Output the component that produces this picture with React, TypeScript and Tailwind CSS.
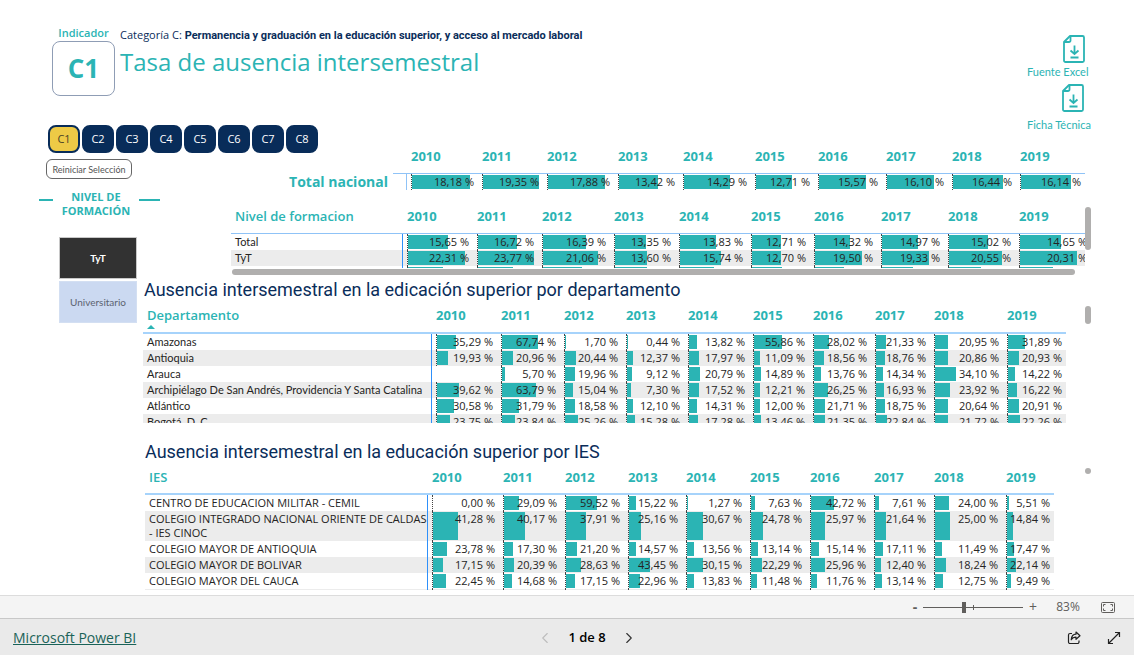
import React, { useState } from 'react';
import { ChevronLeft, ChevronRight } from 'lucide-react';
import clsx from 'clsx';

interface Row {
  name: string;
  values: (number | null)[];
}

interface YearTableProps {
  label: string;
  rows: Row[];
  colWidths: string[];
  /** Value that fills the whole width of a cell */
  scale: number;
  headClass: string;
  lineClass: string;
  nameClass: string;
  cornerLabel?: boolean;
  sorted?: boolean;
}

const YEARS = [2010, 2011, 2012, 2013, 2014, 2015, 2016, 2017, 2018, 2019];
const INDICATORS = ['C1', 'C2', 'C3', 'C4', 'C5', 'C6', 'C7', 'C8'];

const totalRows: Row[] = [
  { name: 'Total nacional', values: [18.18, 19.35, 17.88, 13.42, 14.29, 12.71, 15.57, 16.1, 16.44, 16.14] },
];

const levelRows: Row[] = [
  { name: 'Total', values: [15.65, 16.72, 16.39, 13.35, 13.83, 12.71, 14.32, 14.97, 15.02, 14.65] },
  { name: 'TyT', values: [22.31, 23.77, 21.06, 13.6, 15.74, 12.7, 19.5, 19.33, 20.55, 20.31] },
  { name: 'Universitario', values: [13.9, 14.8, 14.8, 13.4, 12.8, 13, 12, 12.8, 12.5, 12] },
];

const departmentRows: Row[] = [
  { name: 'Amazonas', values: [35.29, 67.74, 1.7, 0.44, 13.82, 55.86, 28.02, 21.33, 20.95, 31.89] },
  { name: 'Antioquia', values: [19.93, 20.96, 20.44, 12.37, 17.97, 11.09, 18.56, 18.76, 20.86, 20.93] },
  { name: 'Arauca', values: [null, 5.7, 19.96, 9.12, 20.79, 14.89, 13.76, 14.34, 34.1, 14.22] },
  {
    name: 'Archipiélago De San Andrés, Providencia Y Santa Catalina',
    values: [39.62, 63.79, 15.04, 7.3, 17.52, 12.21, 26.25, 16.93, 23.92, 16.22],
  },
  { name: 'Atlántico', values: [30.58, 31.79, 18.58, 12.1, 14.31, 12, 21.71, 18.75, 20.64, 20.91] },
  { name: 'Bogotá, D. C.', values: [23.75, 23.84, 25.26, 15.28, 17.28, 13.46, 21.35, 22.84, 21.72, 22.26] },
];

const iesRows: Row[] = [
  { name: 'CENTRO DE EDUCACION MILITAR - CEMIL', values: [0, 29.09, 59.52, 15.22, 1.27, 7.63, 42.72, 7.61, 24, 5.51] },
  {
    name: 'COLEGIO INTEGRADO NACIONAL ORIENTE DE CALDAS - IES CINOC',
    values: [41.28, 40.17, 37.91, 25.16, 30.67, 24.78, 25.97, 21.64, 25, 14.84],
  },
  { name: 'COLEGIO MAYOR DE ANTIOQUIA', values: [23.78, 17.3, 21.2, 14.57, 13.56, 13.14, 15.14, 17.11, 11.49, 17.47] },
  { name: 'COLEGIO MAYOR DE BOLIVAR', values: [17.15, 20.39, 28.63, 43.45, 30.15, 22.29, 25.96, 12.4, 18.24, 22.14] },
  { name: 'COLEGIO MAYOR DEL CAUCA', values: [22.45, 14.68, 17.15, 22.96, 13.83, 11.48, 11.76, 13.14, 12.75, 9.49] },
  { name: 'COLEGIO MILITAR', values: [18, 18, 27, 27, 20, 22, 24, 20, 22, 30] },
];

const formatPercent = (value: number) => `${value.toFixed(2).replace('.', ',')} %`;

const YearTable: React.FC<YearTableProps> = ({
  label,
  rows,
  colWidths,
  scale,
  headClass,
  lineClass,
  nameClass,
  cornerLabel = true,
  sorted,
}) => (
  <table className="w-full table-fixed border-separate border-spacing-0 text-[11px] leading-[14px] text-[#252423]">
    <colgroup>
      <col />
      {colWidths.map((width, index) => (
        <col key={index} className={width} />
      ))}
    </colgroup>
    <thead>
      <tr className={clsx('align-top text-left text-[13px] leading-5 text-[#2bb4b4]', headClass)}>
        {cornerLabel ? (
          <th className={clsx('border-b p-0 pl-1 font-semibold', lineClass)}>
            {label}
            {sorted && (
              <svg viewBox="0 0 8 4" className="h-1 w-2" fill="currentColor" aria-hidden="true">
                <path d="M4 0l4 4H0z" />
              </svg>
            )}
          </th>
        ) : (
          <td className="p-0 align-bottom">
            <span className={clsx('ml-auto block w-3.5 border-b', lineClass)} />
          </td>
        )}
        {YEARS.map((year) => (
          <th key={year} className={clsx('border-b p-0 pl-1 font-bold', lineClass)}>
            {year}
          </th>
        ))}
      </tr>
    </thead>
    <tbody>
      {rows.map((row, rowIndex) => (
        <tr key={row.name} className={clsx('align-top', rowIndex % 2 === 1 && 'bg-[#ececec]')}>
          <th scope="row" className={nameClass}>
            {row.name}
          </th>
          {row.values.map((value, index) => (
            <td key={index} className="relative p-0 py-px pr-1 text-right whitespace-nowrap">
              {value !== null && (
                <>
                  <span className="absolute inset-y-0 right-0 left-1 border-l border-dotted border-[#444] py-px">
                    <span
                      className="block h-full bg-[#2bb4b4]"
                      style={{ width: `${(value / scale) * 100}%` }}
                    />
                  </span>
                  <span className="relative">{formatPercent(value)}</span>
                </>
              )}
            </td>
          ))}
        </tr>
      ))}
    </tbody>
  </table>
);

const DownloadIcon: React.FC = () => (
  <svg viewBox="0 0 22 28" className="h-7 w-[22px]" fill="none" stroke="#2bb4b4" strokeWidth="1.8" aria-hidden="true">
    <path d="M7 1h12.5A1.5 1.5 0 0 1 21 2.5v23a1.5 1.5 0 0 1-1.5 1.5h-17A1.5 1.5 0 0 1 1 25.5V7z" strokeLinejoin="round" />
    <path d="M7.500 1v4.500a1.500 1.500 0 0 1-1.500 1.500H1" />
    <path d="M11.500 10.500v8.500M7.500 15.500l4 3.500 4-3.500M7.500 22.500h8" />
  </svg>
);

const App: React.FC = () => {
  const [indicator, setIndicator] = useState('C1');
  const [level, setLevel] = useState('TyT');

  return (
    <div className="flex min-h-screen flex-col bg-white font-['Open_Sans',sans-serif] text-[#252423]">
      <main className="flex-1 pt-[26px] pr-[43px] pl-[39px]">
        {/* Header */}
        <header className="flex items-start justify-between pl-[13px]">
          <div className="flex gap-[5px]">
            <div className="w-[63px] text-center text-[#2bb4b4]">
              <div className="pb-px text-[11px] leading-[14px] font-semibold">Indicador</div>
              <div className="rounded-lg border border-[#8f9db5] text-[26px] leading-[53px] font-bold">C1</div>
            </div>
            <div className="pt-0.5">
              <p className="text-[11px] leading-[14px] text-[#0a2d5a]">
                Categoría C:{' '}
                <strong className="font-['Roboto',sans-serif] font-bold">
                  Permanencia y graduación en la educación superior, y acceso al mercado laboral
                </strong>
              </p>
              <h1 className="text-2xl leading-[38px] text-[#2bb4b4]">Tasa de ausencia intersemestral</h1>
            </div>
          </div>
          <div className="w-16 pt-[9px] font-['Lato',sans-serif] text-[11px] leading-[14px] whitespace-nowrap text-[#2bb4b4]">
            <a href="#excel" className="flex flex-col">
              <span className="pl-9">
                <DownloadIcon />
              </span>
              <span className="pt-0.5">Fuente Excel</span>
            </a>
            <a href="#ficha" className="flex flex-col pt-[5px]">
              <span className="pl-[35px]">
                <DownloadIcon />
              </span>
              <span className="pt-1.5">Ficha Técnica</span>
            </a>
          </div>
        </header>

        {/* Indicators and national total */}
        <div className="-mt-[7px] flex justify-between">
          <div className="w-[220px] shrink-0 pl-[7px]">
            <nav className="flex gap-0.5 pl-0.5">
              {INDICATORS.map((code) => (
                <button
                  key={code}
                  type="button"
                  onClick={() => setIndicator(code)}
                  className={clsx(
                    'h-7 w-8 shrink-0 rounded-lg border-2 border-[#082c59] text-[11px]',
                    code === indicator ? 'bg-[#eeca46] text-[#4a4326]' : 'bg-[#082c59] text-white'
                  )}
                >
                  {code}
                </button>
              ))}
            </nav>
            <button
              type="button"
              onClick={() => {
                setIndicator('C1');
                setLevel('TyT');
              }}
              className="mt-1.5 h-5 w-[86px] rounded-md border border-[#666] pt-0.5 font-['Lato',sans-serif] text-[9px] whitespace-nowrap text-[#555]"
            >
              Reiniciar Selección
            </button>
          </div>
          <div className="min-w-0 flex-1 pt-[21px] pr-1.5">
            <YearTable
              label="Total"
              cornerLabel={false}
              rows={totalRows}
              scale={20.7}
              headClass="h-7"
              lineClass="border-[#8fc3f7]"
              nameClass="border-r border-[#8fc3f7] p-0 pr-[18px] text-right text-sm leading-4 font-bold whitespace-nowrap text-[#2bb4b4]"
              colWidths={['w-[71px]', 'w-[65px]', 'w-[71px]', 'w-[65px]', 'w-[72px]', 'w-[63px]', 'w-[68px]', 'w-[66px]', 'w-[68px]', 'w-[69px]']}
            />
          </div>
        </div>

        <div className="flex">
          {/* Level slicer */}
          <aside className="w-[104px] shrink-0">
            <div className="flex w-[121px] justify-between">
              <span className="mt-[9px] h-0.5 w-3.5 bg-[#2bb4b4]" />
              <h2 className="text-center text-[11px] leading-[14px] font-bold text-[#2bb4b4]">
                NIVEL DE
                <br />
                FORMACIÓN
              </h2>
              <span className="mt-[9px] h-0.5 w-[21px] bg-[#2bb4b4]" />
            </div>
            <div className="mt-[19px] ml-5 flex w-[78px] flex-col gap-0.5">
              {['TyT', 'Universitario'].map((name) => (
                <button
                  key={name}
                  type="button"
                  onClick={() => setLevel(name)}
                  className={clsx(
                    "h-[42px] border font-['Lato',sans-serif] text-[10px]",
                    level === name
                      ? 'border-[#c8c8c8] bg-[#323232] font-bold text-white'
                      : 'border-[#d3dff2] bg-[#cbd9f1] text-[#5c6370]'
                  )}
                >
                  {name}
                </button>
              ))}
            </div>
          </aside>

          <div className="min-w-0 flex-1">
            {/* By level */}
            <section className="ml-[88px] pt-4">
              <div className="flex">
                <div className="h-[62px] min-w-0 flex-1 overflow-hidden">
                  <div className="-mr-1.5">
                    <YearTable
                      label="Nivel de formacion"
                      rows={levelRows}
                      scale={25.5}
                      headClass="h-7"
                      lineClass="border-[#8fc3f7]"
                      nameClass="border-r border-[#2e90fa] px-1 py-px text-left font-['Lato',sans-serif] font-normal"
                      colWidths={['w-[70px]', 'w-[65px]', 'w-[72px]', 'w-[65px]', 'w-[72px]', 'w-[63px]', 'w-[67px]', 'w-[67px]', 'w-[71px]', 'w-[76px]']}
                    />
                  </div>
                </div>
                <span className="mt-px h-[43px] w-1.5 rounded-full bg-[#b0afae]" />
              </div>
              <div className="mt-px mr-4 ml-px h-1.5 rounded-full bg-[#b0afae]" />
            </section>

            {/* By department */}
            <section>
              <h2 className="pt-[3px] pl-px font-['Roboto',sans-serif] text-lg leading-6 text-[#0a2d5a]">
                Ausencia intersemestral en la edicación superior por departamento
              </h2>
              <div className="mt-[3px] flex">
                <div className="h-[118px] min-w-0 flex-1 overflow-hidden">
                  <YearTable
                    label="Departamento"
                    sorted
                    rows={departmentRows}
                    scale={110}
                    headClass="h-[29px]"
                    lineClass="border-b-2 border-[#a6d3fb]"
                    nameClass="border-r border-[#2e90fa] px-1 py-px text-left font-['Lato',sans-serif] font-normal"
                    colWidths={['w-[65px]', 'w-[63px]', 'w-[62px]', 'w-[62px]', 'w-[65px]', 'w-[60px]', 'w-[62px]', 'w-[59px]', 'w-[73px]', 'w-[63px]']}
                  />
                </div>
                <span className="mt-px ml-[19px] h-[18px] w-1.5 rounded-full bg-[#b0afae]" />
              </div>
            </section>

            {/* By institution */}
            <section className="pl-0.5">
              <h2 className="pt-[17px] font-['Roboto',sans-serif] text-lg leading-6 text-[#0a2d5a]">
                Ausencia intersemestral en la educación superior por IES
              </h2>
              <div className="mt-[3px] flex">
                <div className="h-[123px] min-w-0 flex-1 overflow-hidden">
                  <YearTable
                    label="IES"
                    rows={iesRows}
                    scale={111}
                    headClass="h-7"
                    lineClass="border-b-2 border-[#a6d3fb]"
                    nameClass="border-r border-[#2e90fa] py-px pl-1 text-left font-normal"
                    colWidths={['w-[71px]', 'w-[62px]', 'w-[63px]', 'w-[58px]', 'w-[64px]', 'w-[60px]', 'w-[64px]', 'w-[60px]', 'w-[72px]', 'w-[52px]']}
                  />
                </div>
                <span className="mt-px ml-[31px] size-1.5 rounded-full bg-[#b0afae]" />
              </div>
            </section>
          </div>
        </div>
      </main>

      {/* Zoom bar */}
      <div className="flex h-[23px] items-center justify-end border-t border-[#dcdcdc] bg-[#f4f4f4] pr-[19px] text-[#605e5c]">
        <button type="button" aria-label="Alejar" className="mr-1 w-2 text-sm leading-4 font-bold">
          -
        </button>
        <div className="relative mr-1 flex h-4 w-[100px] items-center">
          <span className="absolute left-[50px] h-[5px] w-px bg-[#605e5c]" />
          <input
            type="range"
            aria-label="Zoom"
            min={0}
            max={100}
            defaultValue={41}
            className="h-px w-full appearance-none bg-[#605e5c] [&::-webkit-slider-thumb]:h-[11px] [&::-webkit-slider-thumb]:w-1 [&::-webkit-slider-thumb]:appearance-none [&::-webkit-slider-thumb]:bg-[#605e5c]"
          />
        </div>
        <button type="button" aria-label="Acercar" className="w-3 text-sm leading-4">
          +
        </button>
        <span className="w-[58px] text-center text-xs">83%</span>
        <button type="button" aria-label="Ajustar a la página" className="ml-1">
          <svg viewBox="0 0 14 11" className="h-[11px] w-3.5" fill="none" stroke="currentColor" aria-hidden="true">
            <rect x="0.5" y="0.5" width="13" height="10" rx="1" />
            <path d="M2.500 4.500v-2h2M9.500 2.500h2v2M11.500 6.500v2h-2M4.500 8.500h-2v-2" />
          </svg>
        </button>
      </div>

      {/* Footer */}
      <footer className="grid h-[37px] grid-cols-3 items-center border-t border-[#c8c8c8] bg-[#eaeaea] pt-0.5 pr-[13px] pl-[13px]">
        <a href="#powerbi" className="justify-self-start text-sm font-medium text-[#1a6358] underline">
          Microsoft Power BI
        </a>
        <div className="flex items-center justify-center gap-3.5 pl-10 text-[13px] font-semibold text-black">
          <button type="button" aria-label="Página anterior" disabled className="text-[#bdbdbd]">
            <ChevronLeft className="size-[18px]" strokeWidth={1.5} />
          </button>
          <span>1 de 8</span>
          <button type="button" aria-label="Página siguiente" className="text-[#333]">
            <ChevronRight className="size-[18px]" strokeWidth={1.5} />
          </button>
        </div>
        <div className="flex items-center justify-end gap-[26px] text-[#222]">
          <button type="button" aria-label="Compartir">
            <svg viewBox="0 0 14 14" className="size-3.5" fill="none" stroke="currentColor" strokeWidth="1.2" strokeLinejoin="round" aria-hidden="true">
              <path d="M5 2.500H3A1.500 1.500 0 0 0 1.500 4v7A1.500 1.500 0 0 0 3 12.500h7.500A1.500 1.500 0 0 0 12 11v-1.500" />
              <path d="M9 1l4 3.700L9 8.300V6.200C6.800 6.200 5.300 7 4.200 8.800 4.500 5.500 6.200 3.300 9 3.200z" />
            </svg>
          </button>
          <button type="button" aria-label="Pantalla completa">
            <svg viewBox="0 0 14 14" className="size-3.5" fill="none" stroke="currentColor" strokeWidth="1.2" aria-hidden="true">
              <path d="M1.500 12.500l11-11M8 1.500h4.500V6M1.500 8v4.500H6" />
            </svg>
          </button>
        </div>
      </footer>
    </div>
  );
};

export default App;
